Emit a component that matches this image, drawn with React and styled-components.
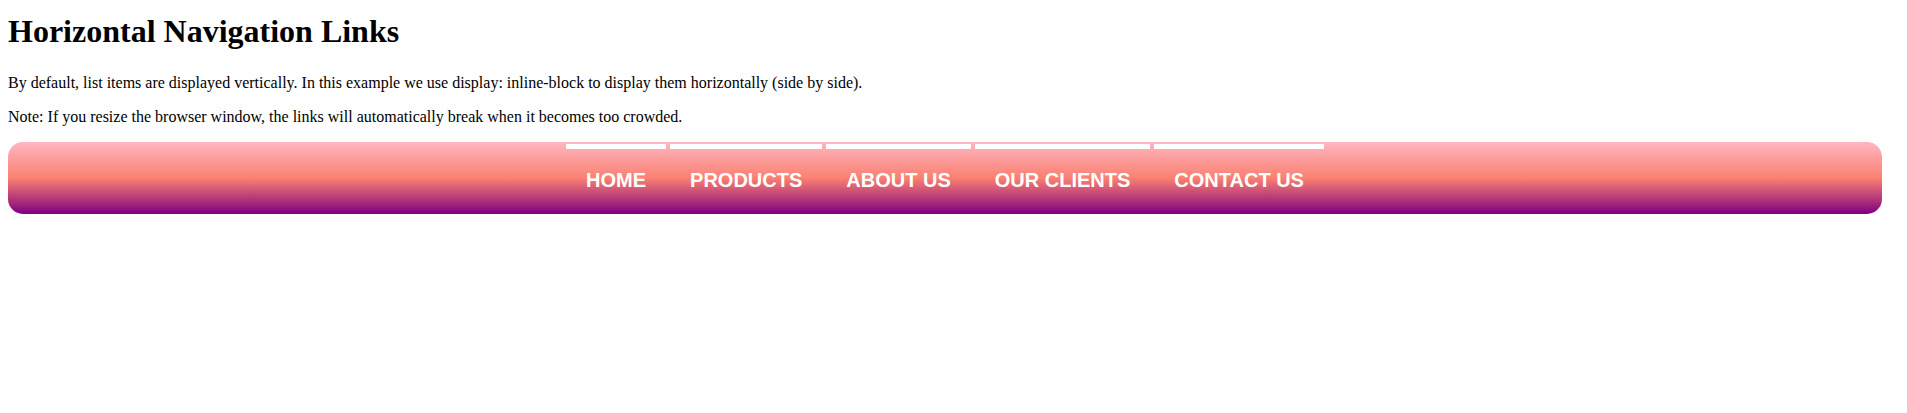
import React from "react";
import styled, { createGlobalStyle } from "styled-components";

const Global = createGlobalStyle`
  html, body { background: #ffffff; }
  body {
    margin: 8px;
    font-family: "Liberation Serif", "Times New Roman", serif;
    font-size: 16px;
    color: #000000;
  }
`;

const Page = styled.div`
  display: flex;
  flex-direction: column;
`;

const Title = styled.h1`
  font-family: "Liberation Serif", "Times New Roman", serif;
  font-size: 32px;
  font-weight: bold;
  margin: 5px 0 24px;
`;

const Paragraph = styled.p`
  font-size: 16px;
  margin: 0 0 16px;
  line-height: normal;
`;

const NavBar = styled.ul`
  list-style: none;
  margin: 0 17px 0 0;
  padding: 2px 0;
  display: flex;
  justify-content: center;
  gap: 4px;
  border-radius: 15px;
  background: linear-gradient(to bottom, #ffb6c1 0%, #fa8072 50%, #800080 100%);
`;

const NavItem = styled.li`
  border-top: 5px solid #ffffff;
`;

const NavLink = styled.a`
  display: block;
  padding: 20px;
  font-family: "Liberation Sans", Arial, sans-serif;
  font-size: 20px;
  font-weight: bold;
  line-height: 23px;
  color: #ffffff;
  text-decoration: none;
  text-transform: uppercase;
`;

const links = ["Home", "Products", "About us", "Our clients", "Contact us"];

export default function App() {
  return (
    <Page>
      <Global />
      <Title>Horizontal Navigation Links</Title>
      <Paragraph>
        By default, list items are displayed vertically. In this example we use display: inline-block to display them horizontally (side by side).
      </Paragraph>
      <Paragraph>
        Note: If you resize the browser window, the links will automatically break when it becomes too crowded.
      </Paragraph>
      <NavBar>
        {links.map((l) => (
          <NavItem key={l}>
            <NavLink href="#">{l}</NavLink>
          </NavItem>
        ))}
      </NavBar>
    </Page>
  );
}
